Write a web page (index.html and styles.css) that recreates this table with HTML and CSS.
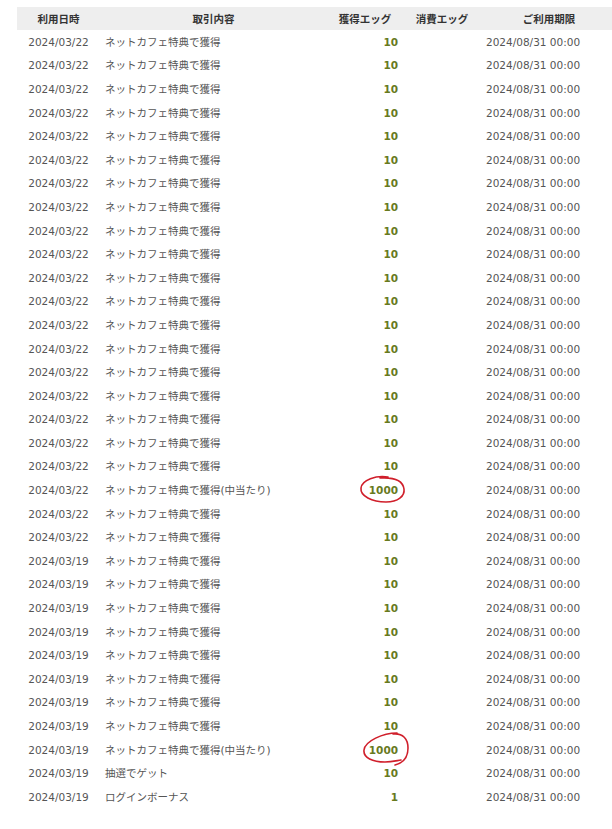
FILE: index.html
```html
<!DOCTYPE html>
<html lang="ja">
<head>
<meta charset="utf-8">
<link rel="stylesheet" href="styles.css">
</head>
<body>
<div class="wrap">
<table class="hist">
<colgroup><col class="c1"><col class="c2"><col class="c3"><col class="c4"><col class="c5"></colgroup>
<thead><tr><th>利用日時</th><th>取引内容</th><th>獲得エッグ</th><th>消費エッグ</th><th>ご利用期限</th></tr></thead>
<tbody id="rows">
<tr><td class="d">2024/03/22</td><td class="t">ネットカフェ特典で獲得</td><td class="n">10</td><td></td><td class="e">2024/08/31 00:00</td></tr>
<tr><td class="d">2024/03/22</td><td class="t">ネットカフェ特典で獲得</td><td class="n">10</td><td></td><td class="e">2024/08/31 00:00</td></tr>
<tr><td class="d">2024/03/22</td><td class="t">ネットカフェ特典で獲得</td><td class="n">10</td><td></td><td class="e">2024/08/31 00:00</td></tr>
<tr><td class="d">2024/03/22</td><td class="t">ネットカフェ特典で獲得</td><td class="n">10</td><td></td><td class="e">2024/08/31 00:00</td></tr>
<tr><td class="d">2024/03/22</td><td class="t">ネットカフェ特典で獲得</td><td class="n">10</td><td></td><td class="e">2024/08/31 00:00</td></tr>
<tr><td class="d">2024/03/22</td><td class="t">ネットカフェ特典で獲得</td><td class="n">10</td><td></td><td class="e">2024/08/31 00:00</td></tr>
<tr><td class="d">2024/03/22</td><td class="t">ネットカフェ特典で獲得</td><td class="n">10</td><td></td><td class="e">2024/08/31 00:00</td></tr>
<tr><td class="d">2024/03/22</td><td class="t">ネットカフェ特典で獲得</td><td class="n">10</td><td></td><td class="e">2024/08/31 00:00</td></tr>
<tr><td class="d">2024/03/22</td><td class="t">ネットカフェ特典で獲得</td><td class="n">10</td><td></td><td class="e">2024/08/31 00:00</td></tr>
<tr><td class="d">2024/03/22</td><td class="t">ネットカフェ特典で獲得</td><td class="n">10</td><td></td><td class="e">2024/08/31 00:00</td></tr>
<tr><td class="d">2024/03/22</td><td class="t">ネットカフェ特典で獲得</td><td class="n">10</td><td></td><td class="e">2024/08/31 00:00</td></tr>
<tr><td class="d">2024/03/22</td><td class="t">ネットカフェ特典で獲得</td><td class="n">10</td><td></td><td class="e">2024/08/31 00:00</td></tr>
<tr><td class="d">2024/03/22</td><td class="t">ネットカフェ特典で獲得</td><td class="n">10</td><td></td><td class="e">2024/08/31 00:00</td></tr>
<tr><td class="d">2024/03/22</td><td class="t">ネットカフェ特典で獲得</td><td class="n">10</td><td></td><td class="e">2024/08/31 00:00</td></tr>
<tr><td class="d">2024/03/22</td><td class="t">ネットカフェ特典で獲得</td><td class="n">10</td><td></td><td class="e">2024/08/31 00:00</td></tr>
<tr><td class="d">2024/03/22</td><td class="t">ネットカフェ特典で獲得</td><td class="n">10</td><td></td><td class="e">2024/08/31 00:00</td></tr>
<tr><td class="d">2024/03/22</td><td class="t">ネットカフェ特典で獲得</td><td class="n">10</td><td></td><td class="e">2024/08/31 00:00</td></tr>
<tr><td class="d">2024/03/22</td><td class="t">ネットカフェ特典で獲得</td><td class="n">10</td><td></td><td class="e">2024/08/31 00:00</td></tr>
<tr><td class="d">2024/03/22</td><td class="t">ネットカフェ特典で獲得</td><td class="n">10</td><td></td><td class="e">2024/08/31 00:00</td></tr>
<tr><td class="d">2024/03/22</td><td class="t">ネットカフェ特典で獲得(中当たり)</td><td class="n"><span class="mark">1000<svg class="circle one" viewBox="0 0 50 32" width="50" height="32"><path d="M30 3 C18 1 4 6 3 14 C2 22 14 28 28 28 C40 28 47 22 46 15 C45 8 38 3 22 4"/></svg></span></td><td></td><td class="e">2024/08/31 00:00</td></tr>
<tr><td class="d">2024/03/22</td><td class="t">ネットカフェ特典で獲得</td><td class="n">10</td><td></td><td class="e">2024/08/31 00:00</td></tr>
<tr><td class="d">2024/03/22</td><td class="t">ネットカフェ特典で獲得</td><td class="n">10</td><td></td><td class="e">2024/08/31 00:00</td></tr>
<tr><td class="d">2024/03/19</td><td class="t">ネットカフェ特典で獲得</td><td class="n">10</td><td></td><td class="e">2024/08/31 00:00</td></tr>
<tr><td class="d">2024/03/19</td><td class="t">ネットカフェ特典で獲得</td><td class="n">10</td><td></td><td class="e">2024/08/31 00:00</td></tr>
<tr><td class="d">2024/03/19</td><td class="t">ネットカフェ特典で獲得</td><td class="n">10</td><td></td><td class="e">2024/08/31 00:00</td></tr>
<tr><td class="d">2024/03/19</td><td class="t">ネットカフェ特典で獲得</td><td class="n">10</td><td></td><td class="e">2024/08/31 00:00</td></tr>
<tr><td class="d">2024/03/19</td><td class="t">ネットカフェ特典で獲得</td><td class="n">10</td><td></td><td class="e">2024/08/31 00:00</td></tr>
<tr><td class="d">2024/03/19</td><td class="t">ネットカフェ特典で獲得</td><td class="n">10</td><td></td><td class="e">2024/08/31 00:00</td></tr>
<tr><td class="d">2024/03/19</td><td class="t">ネットカフェ特典で獲得</td><td class="n">10</td><td></td><td class="e">2024/08/31 00:00</td></tr>
<tr><td class="d">2024/03/19</td><td class="t">ネットカフェ特典で獲得</td><td class="n">10</td><td></td><td class="e">2024/08/31 00:00</td></tr>
<tr><td class="d">2024/03/19</td><td class="t">ネットカフェ特典で獲得(中当たり)</td><td class="n"><span class="mark">1000<svg class="circle two" viewBox="0 0 50 38" width="50" height="38"><path d="M36 4 C22 4 4 12 3 21 C2 29 12 33 24 33 C30 33 34 32 40 31 M34 36 C42 34 47 28 47 19 C47 10 42 4 32 5"/></svg></span></td><td></td><td class="e">2024/08/31 00:00</td></tr>
<tr><td class="d">2024/03/19</td><td class="t">抽選でゲット</td><td class="n">10</td><td></td><td class="e">2024/08/31 00:00</td></tr>
<tr><td class="d">2024/03/19</td><td class="t">ログインボーナス</td><td class="n">1</td><td></td><td class="e">2024/08/31 00:00</td></tr>
</tbody>
</table>
</div>
</body>
</html>
```
FILE: styles.css
```css
html, body {
  margin: 0;
  padding: 0;
  background: #fff;
}
.wrap {
  padding: 7px 0 0 17px;
  width: 595px;
  overflow: hidden;
}
.hist {
  width: 600px;
  table-layout: fixed;
  border-collapse: collapse;
  font-family: "DejaVu Sans", "Noto Sans CJK JP", sans-serif;
  font-size: 10.5px;
  color: #555;
}
.c1 { width: 83px; }
.c2 { width: 227px; }
.c3 { width: 76px; }
.c4 { width: 78px; }
.c5 { width: 136px; }
.hist th {
  background: #eeeeee;
  color: #333;
  font-weight: bold;
  height: 23px;
  padding: 0;
  text-align: center;
  font-size: 10.5px;
  white-space: nowrap;
}
.hist td {
  height: 23.6px;
  padding: 0 5px;
  white-space: nowrap;
  line-height: 14px;
}
.hist td.d { text-align: center; padding: 0; }
.hist td.t { text-align: left; }
.hist td.n {
  text-align: right;
  font-weight: bold;
  color: #687a1e;
}
.hist td.e { text-align: left; }
.mark {
  position: relative;
  display: inline-block;
}
.circle {
  position: absolute;
  fill: none;
  stroke: #d01f2b;
  stroke-width: 1.6;
  stroke-linecap: round;
}
.circle.one {
  left: -11px;
  top: -9px;
}
.circle.two {
  left: -8px;
  top: -14px;
}
```
